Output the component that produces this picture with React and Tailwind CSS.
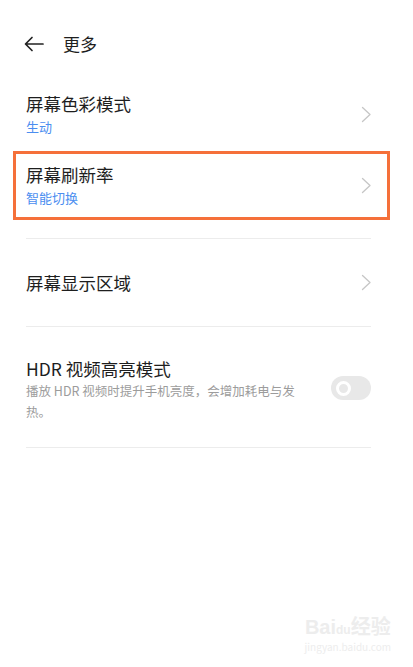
const FONT = { fontFamily: '"Noto Sans CJK SC", "Noto Sans", sans-serif' }

function Chevron() {
  return (
    <svg width="11" height="17" viewBox="0 0 11 17" fill="none" className="shrink-0">
      <path d="M1.5 1.5 L9 8.5 L1.5 15.5" stroke="#c6c6c6" strokeWidth="1.3" strokeLinecap="round" strokeLinejoin="round" />
    </svg>
  )
}

function BackArrow() {
  return (
    <svg width="20" height="16" viewBox="0 0 20 16" fill="none" className="shrink-0">
      <path d="M19 8 H2 M8 1.5 L1.5 8 L8 14.5" stroke="#222" strokeWidth="1.7" strokeLinecap="round" strokeLinejoin="round" />
    </svg>
  )
}

function NavRow({ title, sub, highlight }) {
  return (
    <div
      className={`flex items-center justify-between border-[3px] pl-[10px] pr-[15px] pt-[9px] pb-[10px] ${
        highlight ? 'border-[#f5703a]' : 'border-transparent'
      }`}
    >
      <div className="flex flex-col gap-[2px]">
        <span className="text-[17.5px] leading-[24px] text-[#1e1e1e]">{title}</span>
        <span className="text-[13px] leading-[18px] text-[#4b8ef0]">{sub}</span>
      </div>
      <Chevron />
    </div>
  )
}

export default function App() {
  return (
    <div className="relative h-[667px] w-[413px] overflow-hidden bg-white" style={FONT}>
      {/* header */}
      <div className="mt-[32px] flex h-[24px] items-center gap-[19px] pl-[24px]">
        <BackArrow />
        <span className="text-[17px] text-[#1e1e1e]">更多</span>
      </div>

      <div className="mt-[24px] pl-[13px] pr-[23px]">
        <NavRow title="屏幕色彩模式" sub="生动" />
        <div className="mt-[2px]">
          <NavRow title="屏幕刷新率" sub="智能切换" highlight />
        </div>

        <div className="mt-[18px] ml-[13px] mr-[19px] h-px bg-[#ececec]" />

        <div className="flex h-[87px] items-center justify-between pl-[13px] pr-[18px]">
          <span className="text-[17.5px] leading-[24px] text-[#1e1e1e]">屏幕显示区域</span>
          <Chevron />
        </div>

        <div className="ml-[13px] mr-[19px] h-px bg-[#ececec]" />

        <div className="flex items-center justify-between pl-[13px] pr-[19px] pt-[31px] pb-[25px]">
          <div className="flex w-[292px] flex-col">
            <span className="text-[17.5px] leading-[22px] text-[#1e1e1e]">HDR 视频高亮模式</span>
            <span className="text-[12.5px] leading-[21px] text-[#9c9c9c]">
              播放 HDR 视频时提升手机亮度，会增加耗电与发热。
            </span>
          </div>
          <div className="mb-[4px] flex h-[24px] w-[40px] items-center rounded-full bg-[#e8e8e8] pl-[5px]">
            <div className="h-[15px] w-[15px] rounded-full border-[3px] border-white" />
          </div>
        </div>

        <div className="ml-[13px] mr-[19px] h-px bg-[#ececec]" />
      </div>

      {/* watermark */}
      <div className="absolute bottom-[14px] right-[22px] flex flex-col items-center text-[#ededed]">
        <span className="text-[20px] font-bold leading-[22px]" style={{ fontFamily: '"Liberation Sans", "Noto Sans CJK SC", sans-serif' }}>
          Bai<span className="text-[12px]">du</span>经验
        </span>
        <span className="text-[10px] leading-[12px]">jingyan.baidu.com</span>
      </div>
    </div>
  )
}
